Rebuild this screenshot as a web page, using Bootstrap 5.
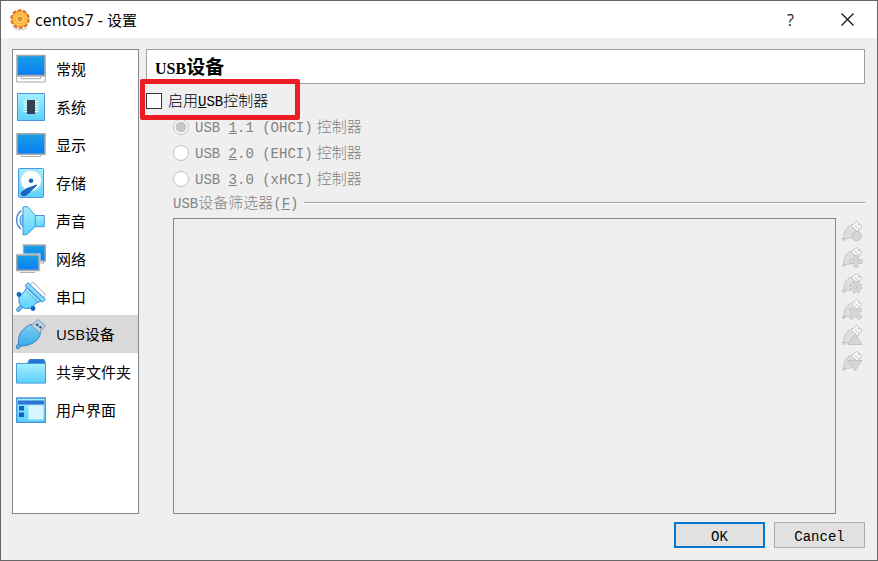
<!DOCTYPE html>
<html lang="zh-CN">
<head>
<meta charset="utf-8">
<meta name="viewport" content="width=device-width, initial-scale=1">
<title>centos7 - 设置</title>
<link href="https://cdn.jsdelivr.net/npm/bootstrap@5.3.0/dist/css/bootstrap.min.css" rel="stylesheet">
<style>
  body { font-family: "Open Sans", "Noto Sans CJK SC", sans-serif; font-size: 15px; line-height: 20px; color: #000; }
  .dialog { background: #efefef; border: 1px solid #666; }
  .titlebar { height: 37px; padding: 0 1px 0 8px; }
  .titlebar h1 { font-size: 15px; line-height: 20px; }
  .titlebar .latin { font-size: 16px; }
  .titlebar .btn { width: 57px; height: 36px; --bs-btn-font-size: 16px; --bs-btn-border-radius: 0; }
  .content { padding: 11px 12px 8px 11px; gap: 7px; }
  .sidebar { width: 127px; border: 1px solid #828790; }
  .sidebar .list-group { --bs-list-group-border-radius: 0; }
  .sidebar .list-group-item { height: 38px; margin: 0; padding: 0 3px; gap: 10px; color: #000; background: #fff; white-space: nowrap; }
  .sidebar .list-group-item.active { background: #d9d9d9; }
  .mono { font-family: "Liberation Mono", "Noto Sans CJK SC", monospace; }
  .half { font-size: 14px; }
  .half-gap { margin-right: 4px; }
  .heading-box { height: 35px; padding: 3px 0 0 8px; border: 1px solid #a0a0a0; margin-bottom: 4px; }
  .heading-box h2 { font: bold 19px/24px "Liberation Serif", "Noto Sans CJK SC", serif; }
  .heading-box .latin { font-size: 16px; }
  .option { height: 26px; gap: 6px; }
  .option .form-check-input { width: 16px; height: 16px; margin: 0; border: 1px solid #333; background-color: #fff; }
  .option .form-check-input[type=checkbox] { border-radius: 0; }
  .option .form-check-input[type=radio] { border-color: #c3c3c3; opacity: 1; }
  .option .form-check-input[type=radio]:checked { background-image: radial-gradient(circle at center, #c8c8c8 5px, #fff 6px); }
  .option .form-check-label, .filter-title .muted { padding-top: 2px; color: #838383; font-weight: 300; }
  .option .form-check-input:disabled ~ .form-check-label { opacity: 1; }
  .option .enable-label { color: #000; }
  .highlight { left: -6px; top: -9px; width: 160px; height: 41px; border: 5px solid #ed1c24; border-radius: 2px; pointer-events: none; }
  .nested { padding-left: 27px; }
  .filter-title { height: 22px; gap: 6px; margin-bottom: 4px; }
  .filter-title .rule { height: 2px; background: #a0a0a0; border-bottom: 1px solid #fff; }
  .filters { gap: 6px; }
  .filter-list { border: 1px solid #828790; }
  .tools { width: 23px; }
  .tools .btn { height: 26px; border: 0; opacity: 1; }
  .actions { padding: 0 12px 12px; gap: 9px; }
  .actions .btn { width: 91px; height: 26px; font-size: 14px; line-height: 20px; padding: 4px 0 0; border-radius: 0; background: #e1e1e1; border: 1px solid #adadad; color: #000; }
  .actions .btn-ok { border: 2px solid #0078d7; padding-top: 3px; }
</style>
<script src="https://cdn.jsdelivr.net/npm/bootstrap@5.3.0/dist/js/bootstrap.bundle.min.js"></script>
</head>
<body>
<svg width="0" height="0" class="position-absolute" aria-hidden="true">
  <defs>
    <linearGradient id="screen" x2="0" y2="1"><stop stop-color="#1ba1e2"/><stop offset="1" stop-color="#087df5"/></linearGradient>
    <linearGradient id="ice" x2="0" y2="1"><stop stop-color="#a5efff"/><stop offset="1" stop-color="#5bd0fb"/></linearGradient>
    <linearGradient id="plug" x2="0" y2="1"><stop stop-color="#7fd0f5"/><stop offset="1" stop-color="#38a9ea"/></linearGradient>
    <radialGradient id="gold"><stop stop-color="#fff0a8"/><stop offset=".6" stop-color="#fed25e"/><stop offset="1" stop-color="#fba834"/></radialGradient>
    <g id="grayplug" stroke-linejoin="round">
      <path d="M2 17C1.500 10 5 5 11 3.500l6 5c-1 6-6 9-13 9z" fill="#dedede" stroke="#c8c8c8"/>
      <circle cx="1.800" cy="18" r="1.500" fill="#d0d0d0" stroke="#c8c8c8"/>
      <path d="M9.500 5L14.500.5l5.500 4.500-4.500 5.500z" fill="#fafafa" stroke="#c3c3c3"/>
      <path d="M13 4.500l1.800 1.500M16 3l1.500 1.200M15.500 6.500l1.200 1" stroke="#aaa" fill="none"/>
    </g>
  </defs>
</svg>
<div class="dialog min-vh-100 d-flex flex-column">
  <header class="titlebar bg-white d-flex align-items-center">
    <svg width="22" height="22" viewBox="0 0 22 22" aria-hidden="true">
      <path d="M3 16q8 7 16 0l-1 4q-7 3-14 0z" fill="#ddd"/>
      <circle cx="11" cy="10" r="8.200" fill="none" stroke="#d9691c" stroke-width="3" stroke-dasharray="3.600 1.552"/>
      <circle cx="11" cy="10" r="8" fill="url(#gold)" stroke="#ef8a22"/>
      <circle cx="11" cy="10" r="4.800" fill="#fcc45a" stroke="#f9ab3d"/>
      <circle cx="11" cy="10" r="1.600" fill="#f4a44a" stroke="#cf7020"/>
    </svg>
    <h1 class="m-0 ms-1 fw-normal flex-grow-1"><span class="latin">centos7 - </span>设置</h1>
    <button type="button" class="btn p-0" aria-label="帮助">?</button>
    <button type="button" class="btn p-0 d-flex align-items-center justify-content-center" aria-label="关闭">
      <svg width="13" height="13" viewBox="0 0 13 13" stroke="#111" stroke-width="1.200"><path d="M.5.5l12 12M12.500.5l-12 12"/></svg>
    </button>
  </header>

  <div class="content d-flex flex-grow-1">
    <nav class="sidebar bg-white flex-shrink-0" aria-label="设置">
      <div class="list-group list-group-flush">
        <button type="button" class="list-group-item border-0 d-flex align-items-center">
          <svg width="30" height="30" viewBox="0 0 30 30"><path d="M.7 20h28.600v8H.7z" fill="#fff" stroke="#a8a8a8"/><path d="M1 1.500h28v20H1z" fill="url(#screen)" stroke="#a8a8a8" stroke-width="1.500"/><path d="M1.700 22.200h26.600M5.500 22.500v2.200h19v-2.200" fill="#fff" stroke="#aaa"/></svg>
          <span>常规</span>
        </button>
        <button type="button" class="list-group-item border-0 d-flex align-items-center">
          <svg width="30" height="30" viewBox="0 0 30 30"><path d="M1.500 1.500h27v27h-27z" fill="url(#ice)" stroke="#4a94dd"/><path d="M7.500 9.500h15M7.500 12h15M7.500 14.500h15M7.500 17h15M7.500 19.500h15" stroke="#fff" stroke-width="1.200"/><path d="M11 8h8v14h-8z" fill="#35404f"/></svg>
          <span>系统</span>
        </button>
        <button type="button" class="list-group-item border-0 d-flex align-items-center">
          <svg width="30" height="30" viewBox="0 0 30 30"><path d="M5.500 24v2.500h19V24" fill="#fff" stroke="#aaa"/><path d="M1 3.700h28v20.600H1z" fill="url(#screen)" stroke="#a8a8a8" stroke-width="1.500"/></svg>
          <span>显示</span>
        </button>
        <button type="button" class="list-group-item border-0 d-flex align-items-center">
          <svg width="30" height="30" viewBox="0 0 30 30"><rect x="2.500" y=".5" width="25" height="29" rx="1" fill="url(#ice)" stroke="#4a94dd"/><circle cx="15" cy="12.700" r="10.500" fill="#fff" stroke="#b4dcf2"/><circle cx="15" cy="12.700" r="2.300" fill="#1268bf"/><path d="M21 17L11 20.500l-5 3.500q-2 2 .5 3.500 3 1 5.500-2z" fill="#1567d2" stroke="#2159ae"/></svg>
          <span>存储</span>
        </button>
        <button type="button" class="list-group-item border-0 d-flex align-items-center">
          <svg width="30" height="30" viewBox="0 0 30 30"><path d="M5.500 4.500Q.5 8 .7 14q0 6 4.300 9" fill="none" stroke="#3d83cf" stroke-width="1.400"/><path d="M7 9q-3 .5-3 5.500t3 5.500z" fill="#8fdcf9" stroke="#3d83cf"/><path d="M18 9.500h10.300v11.200H18z" fill="url(#ice)" stroke="#4a94dd"/><path d="M7 1l4.500-.5 7.800 9v11L11 28.500 7 29z" fill="url(#ice)" stroke="#4a94dd"/></svg>
          <span>声音</span>
        </button>
        <button type="button" class="list-group-item border-0 d-flex align-items-center">
          <svg width="30" height="30" viewBox="0 0 30 30"><path d="M23 17v2h5v-2" fill="#fff" stroke="#aaa"/><path d="M7.500 1h21.800v16H7.500z" fill="url(#screen)" stroke="#aaa" stroke-width="1.400"/><path d="M4 26v2.400h15V26" fill="#fff" stroke="#aaa"/><path d="M.7 11H23v15.300H.7z" fill="url(#screen)" stroke="#e5e5e5" stroke-width="3"/><path d="M.7 11H23v15.300H.7z" fill="url(#screen)" stroke="#aaa" stroke-width="1.400"/></svg>
          <span>网络</span>
        </button>
        <button type="button" class="list-group-item border-0 d-flex align-items-center">
          <svg width="30" height="30" viewBox="0 0 30 30" stroke-linejoin="round"><path d="M13.500 3L16 .8q1-.6 2 .2L28.800 12q.7 1 0 2l-1.500 2z" fill="#fff" stroke="#aaa"/><path d="M5.500 24.500L2.200 27.800" stroke="#3c8bd1" stroke-width="4" stroke-linecap="round"/><path d="M5.500 24.500l-3.300 3.300" stroke="#72c8f4" stroke-width="2" stroke-linecap="round"/><path d="M10.500 5.500L8.500 9.500 3 14.500v6q1.500 5 6.500 6l6.500-.5 4-5 5-2z" fill="url(#ice)" stroke="#3a86d8"/><circle cx="3" cy="12.500" r="2.400" fill="#1263cb"/><circle cx="17" cy="26.500" r="2.400" fill="#1263cb"/><path d="M10.300 9L21 19.700" stroke="#5aaee6" fill="none"/><path d="M9 3.500L12 .7l17.300 16.500-2.800 3z" fill="#83d9fa" stroke="#3a86d8"/></svg>
          <span>串口</span>
        </button>
        <button type="button" class="list-group-item active border-0 d-flex align-items-center" aria-current="page">
          <svg width="30" height="30" viewBox="0 0 30 30" stroke-linejoin="round"><path d="M4 25.500l-2 2.300" stroke="#2980bf" stroke-width="4.200" stroke-linecap="round"/><path d="M4 25.500l-2 2.300" stroke="#5cbcf0" stroke-width="2.200" stroke-linecap="round"/><path d="M2.500 24.500Q1.500 14 10 8q4-2.800 7-2.800l7.500 8Q24 20 17 24q-6 3.500-12 3z" fill="url(#plug)" stroke="#3c83b8"/><path d="M15.500 6.500L21.700.6l7.700 5.900-5.900 7.200z" fill="#b9d4ea" stroke="#8398aa"/><path d="M20.300 5l2 1.800M23.500 7.500l1.800 1.500" stroke="#35404b" stroke-width="1.800"/></svg>
          <span>USB设备</span>
        </button>
        <button type="button" class="list-group-item border-0 d-flex align-items-center">
          <svg width="30" height="30" viewBox="0 0 30 30"><path d="M11.500 6.500l2-4H28l1.500 4z" fill="#2474d2" stroke="#3a7fd0"/><path d="M.5 6.500h29v19.600H.5z" fill="url(#ice)" stroke="#4a9bdd"/></svg>
          <span>共享文件夹</span>
        </button>
        <button type="button" class="list-group-item border-0 d-flex align-items-center">
          <svg width="30" height="30" viewBox="0 0 30 30"><path d="M.7 3h28.600v24.300H.7z" fill="url(#ice)" stroke="#4793d9" stroke-width="1.300"/><path d="M2 5.500h26v4H2z" fill="#2b75d4"/><path d="M3 11h5v4.500H3zM3 17.500h5V22H3z" fill="#0f5fcf"/><path d="M12.500 10.500h15v14h-15z" fill="#d7f6ff"/></svg>
          <span>用户界面</span>
        </button>
      </div>
    </nav>

    <main class="flex-grow-1 d-flex flex-column mono">
      <div class="heading-box bg-white d-flex align-items-center">
        <h2 class="m-0"><span class="latin">USB</span>设备</h2>
      </div>
      <div class="option position-relative d-flex align-items-center">
        <input class="form-check-input flex-shrink-0" type="checkbox" id="enableUsb">
        <label class="form-check-label enable-label" for="enableUsb">启用<span class="half"><u>U</u>SB</span>控制器</label>
        <div class="highlight position-absolute"></div>
      </div>
      <div class="nested flex-grow-1 d-flex flex-column">
        <div class="option d-flex align-items-center">
          <input class="form-check-input" type="radio" name="usb" id="usb1" checked disabled>
          <label class="form-check-label" for="usb1"><span class="half half-gap">USB <u>1</u>.1 (OHCI)</span>控制器</label>
        </div>
        <div class="option d-flex align-items-center">
          <input class="form-check-input" type="radio" name="usb" id="usb2" disabled>
          <label class="form-check-label" for="usb2"><span class="half half-gap">USB <u>2</u>.0 (EHCI)</span>控制器</label>
        </div>
        <div class="option d-flex align-items-center">
          <input class="form-check-input" type="radio" name="usb" id="usb3" disabled>
          <label class="form-check-label" for="usb3"><span class="half half-gap">USB <u>3</u>.0 (xHCI)</span>控制器</label>
        </div>
        <div class="filter-title d-flex align-items-center">
          <span class="muted" id="filterTitle"><span class="half">USB</span>设备筛选器<span class="half">(<u>F</u>)</span></span>
          <div class="rule flex-grow-1"></div>
        </div>
        <div class="filters d-flex flex-grow-1">
          <div class="filter-list flex-grow-1" role="listbox" aria-labelledby="filterTitle"></div>
          <div class="tools d-flex flex-column">
            <button type="button" class="btn p-0 d-flex align-items-center" disabled aria-label="添加空筛选器"><svg width="21" height="21" viewBox="0 0 21 21"><use href="#grayplug"/><circle cx="14.700" cy="15" r="4.700" fill="#d6d6d6" stroke="#c4c4c4"/></svg></button>
            <button type="button" class="btn p-0 d-flex align-items-center" disabled aria-label="从设备添加筛选器"><svg width="21" height="21" viewBox="0 0 21 21"><use href="#grayplug"/><path d="M12 8.500h4v4h4v4h-4v3.500h-4v-3.500H7.500v-4H12z" fill="#d6d6d6" stroke="#c4c4c4"/></svg></button>
            <button type="button" class="btn p-0 d-flex align-items-center" disabled aria-label="编辑筛选器"><svg width="21" height="21" viewBox="0 0 21 21"><use href="#grayplug"/><circle cx="13.700" cy="14" r="5" fill="#d2d2d2" stroke="#c3c3c3" stroke-width="3" stroke-dasharray="2.200 1.727"/><circle cx="13.700" cy="14" r="4.800" fill="#d6d6d6"/><circle cx="13.700" cy="14" r="1.400" fill="#f2f2f2" stroke="#bbb"/></svg></button>
            <button type="button" class="btn p-0 d-flex align-items-center" disabled aria-label="删除筛选器"><svg width="21" height="21" viewBox="0 0 21 21"><use href="#grayplug"/><path d="M9.500 8.500l4 3 4-3 2.500 2.500-3 3.500 3 3.500-2.500 2.500-4-3-4 3L7 18l3-3.500L7 11z" fill="#d6d6d6" stroke="#c4c4c4"/></svg></button>
            <button type="button" class="btn p-0 d-flex align-items-center" disabled aria-label="上移"><svg width="21" height="21" viewBox="0 0 21 21"><use href="#grayplug"/><path d="M13 9.500l7 10H5.500z" fill="#d6d6d6" stroke="#c4c4c4"/></svg></button>
            <button type="button" class="btn p-0 d-flex align-items-center" disabled aria-label="下移"><svg width="21" height="21" viewBox="0 0 21 21"><use href="#grayplug"/><path d="M5.500 9.500H20l-7 10z" fill="#d6d6d6" stroke="#c4c4c4"/></svg></button>
          </div>
        </div>
      </div>
    </main>
  </div>

  <footer class="actions d-flex justify-content-end mono">
    <button type="button" class="btn btn-ok">OK</button>
    <button type="button" class="btn">Cancel</button>
  </footer>
</div>
</body>
</html>
